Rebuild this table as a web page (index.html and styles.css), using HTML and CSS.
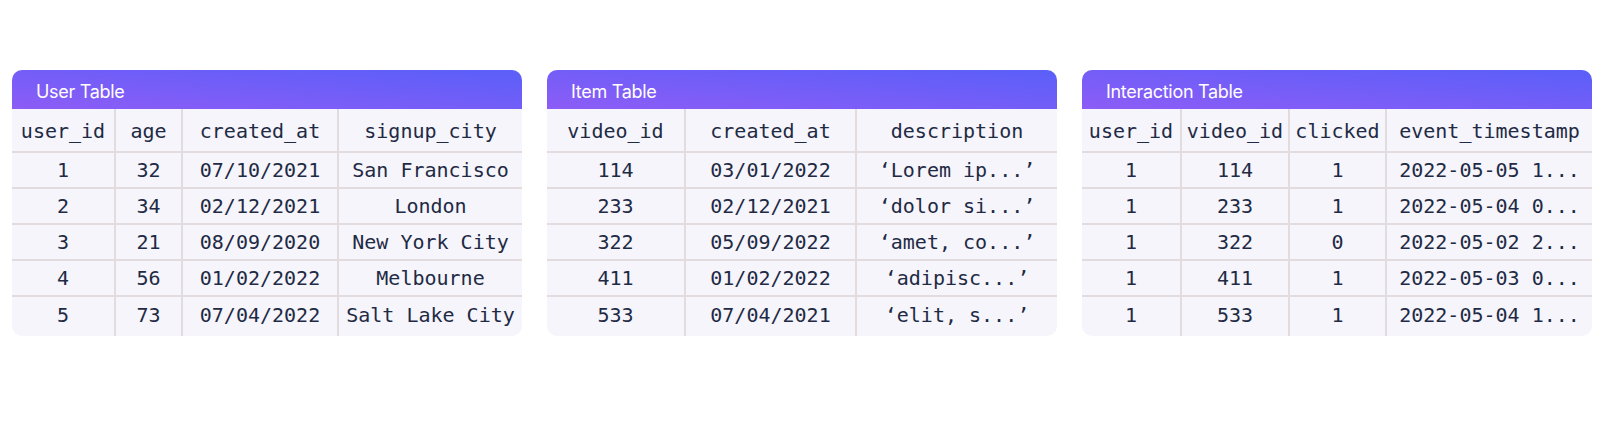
FILE: index.html
```html
<!DOCTYPE html>
<html lang="en">
<head>
<meta charset="utf-8">
<title>Tables</title>
<link rel="stylesheet" href="styles.css">
</head>
<body>
<main class="tables">
  <section class="card">
    <div class="card-title">User Table</div>
    <table class="grid">
      <colgroup><col class="u1"><col class="u2"><col class="u3"><col class="u4"></colgroup>
      <thead><tr><th>user_id</th><th>age</th><th>created_at</th><th>signup_city</th></tr></thead>
      <tbody>
        <tr><td>1</td><td>32</td><td>07/10/2021</td><td>San Francisco</td></tr>
        <tr><td>2</td><td>34</td><td>02/12/2021</td><td>London</td></tr>
        <tr><td>3</td><td>21</td><td>08/09/2020</td><td>New York City</td></tr>
        <tr><td>4</td><td>56</td><td>01/02/2022</td><td>Melbourne</td></tr>
        <tr><td>5</td><td>73</td><td>07/04/2022</td><td>Salt Lake City</td></tr>
      </tbody>
    </table>
  </section>
  <section class="card">
    <div class="card-title">Item Table</div>
    <table class="grid">
      <colgroup><col class="i1"><col class="i2"><col class="i3"></colgroup>
      <thead><tr><th>video_id</th><th>created_at</th><th>description</th></tr></thead>
      <tbody>
        <tr><td>114</td><td>03/01/2022</td><td>‘Lorem ip...’</td></tr>
        <tr><td>233</td><td>02/12/2021</td><td>‘dolor si...’</td></tr>
        <tr><td>322</td><td>05/09/2022</td><td>‘amet, co...’</td></tr>
        <tr><td>411</td><td>01/02/2022</td><td>‘adipisc...’</td></tr>
        <tr><td>533</td><td>07/04/2021</td><td>‘elit, s...’</td></tr>
      </tbody>
    </table>
  </section>
  <section class="card">
    <div class="card-title">Interaction Table</div>
    <table class="grid">
      <colgroup><col class="x1"><col class="x2"><col class="x3"><col class="x4"></colgroup>
      <thead><tr><th>user_id</th><th>video_id</th><th>clicked</th><th>event_timestamp</th></tr></thead>
      <tbody>
        <tr><td>1</td><td>114</td><td>1</td><td>2022-05-05 1...</td></tr>
        <tr><td>1</td><td>233</td><td>1</td><td>2022-05-04 0...</td></tr>
        <tr><td>1</td><td>322</td><td>0</td><td>2022-05-02 2...</td></tr>
        <tr><td>1</td><td>411</td><td>1</td><td>2022-05-03 0...</td></tr>
        <tr><td>1</td><td>533</td><td>1</td><td>2022-05-04 1...</td></tr>
      </tbody>
    </table>
  </section>
</main>
</body>
</html>
```
FILE: styles.css
```css
html, body {
  margin: 0;
  padding: 0;
  background: #ffffff;
}

.tables {
  display: flex;
  gap: 25px;
  padding: 70px 12px 0;
  align-items: flex-start;
}

.card {
  flex: 1 1 0;
  min-width: 0;
  background: #f5f5fb;
  border-radius: 10px;
  overflow: hidden;
}

.card-title {
  height: 39px;
  box-sizing: border-box;
  padding: 9px 0 0 24px;
  background: linear-gradient(to top right, #8d5cf6, #5a5ff9);
  color: #ffffff;
  font-family: "Inter", "Noto Sans", sans-serif;
  font-size: 18px;
  line-height: 25px;
  letter-spacing: -0.3px;
}

.grid {
  width: 100%;
  table-layout: fixed;
  border-collapse: separate;
  border-spacing: 0;
  font-family: "DejaVu Sans Mono", "Liberation Mono", monospace;
  font-size: 20px;
  color: #1f2a44;
}

.grid th,
.grid td {
  padding: 0;
  text-align: center;
  font-weight: 400;
  white-space: nowrap;
  border-right: 2px solid #e3dcde;
  border-bottom: 2px solid #e3dcde;
  box-sizing: border-box;
}

.grid th:last-child,
.grid td:last-child {
  border-right: none;
}

.grid th { height: 44px; padding-top: 2px; }
.grid td { height: 36px; }

.grid tbody tr:last-child td {
  border-bottom: none;
  height: 39px;
  padding-bottom: 4px;
}

.u1 { width: 104px; }
.u2 { width: 67px; }
.u3 { width: 156px; }
.u4 { width: auto; }

.i1 { width: 139px; }
.i2 { width: 171px; }
.i3 { width: auto; }

.x1 { width: 100px; }
.x2 { width: 108px; }
.x3 { width: 97px; }
.x4 { width: auto; }
```
